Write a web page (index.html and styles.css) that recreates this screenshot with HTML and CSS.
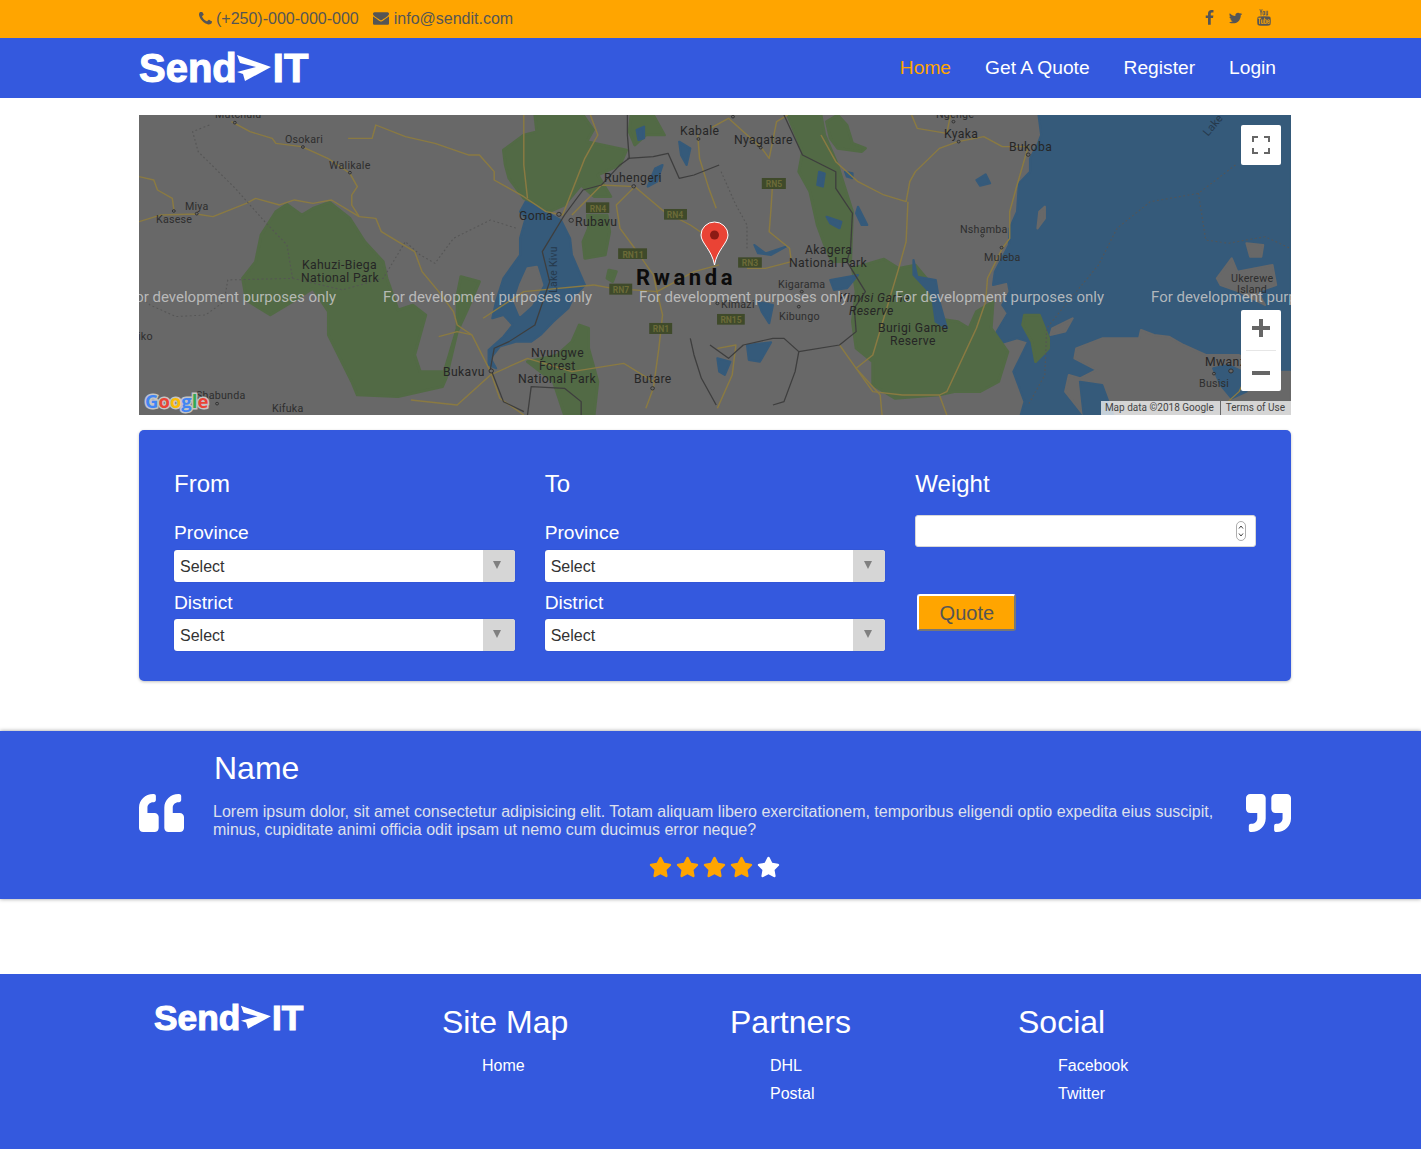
FILE: index.html
```html
<!DOCTYPE html>
<html lang="en">
<head>
<meta charset="utf-8">
<title>SendIT</title>
<link rel="stylesheet" href="styles.css">
</head>
<body>
<header>
  <div class="topbar">
    <div class="wrap topbar-in">
      <div class="contacts">
        <span class="contact"><svg class="ic ic-phone" viewBox="192 192 1408 1408"><path d="M1600 1240q0 27-10 70.5t-21 68.5q-21 50-122 106-94 51-186 51-27 0-53-3.5t-57.5-12.5-47-14.5-55.5-20.5-49-18q-98-35-175-83-127-79-264-216t-216-264q-48-77-83-175-3-9-18-49t-20.5-55.5-14.5-47-12.5-57.5-3.5-53q0-92 51-186 56-101 106-122 25-11 68.5-21t70.5-10q14 0 21 3 18 6 53 76 11 19 30 54t35 63.5 31 53.5q3 4 17.5 25t21.5 35.5 7 28.5q0 20-28.5 50t-62 55-62 53-28.5 46q0 9 5 22.5t8.5 20.5 14 24 11.5 19q76 137 174 235t235 174q2 1 19 11.5t24 14 20.5 8.5 22.5 5q18 0 46-28.5t53-62 55-62 50-28.5q14 0 28.5 7t35.5 21.5 25 17.5q25 15 53.5 31t63.5 35 54 30q70 35 76 53 3 7 3 21z"/></svg>(+250)-000-000-000</span>
        <span class="contact"><svg class="ic ic-mail" viewBox="0 0 1792 1792"><path d="M1792 710v794q0 66-47 113t-113 47h-1472q-66 0-113-47t-47-113v-794q44 49 101 87 362 246 497 345 57 42 92.5 65.5t94.5 48 110 24.5h2q51 0 110-24.5t94.5-48 92.5-65.5q170-123 498-345 57-39 100-87zm0-294q0 79-49 151t-122 123q-376 261-468 325-10 7-42.5 30.5t-54 38-52 32.5-57.5 27-50 9h-2q-23 0-50-9t-57.5-27-52-32.5-54-38-42.5-30.5q-91-64-262-182.5t-205-142.5q-62-42-117-115.5t-55-136.5q0-78 41.5-130t118.5-52h1472q65 0 112.5 47t47.5 113z"/></svg>info@sendit.com</span>
      </div>
      <div class="socials">
        <svg class="ic ic-fb" viewBox="400 0 1000 1792"><path d="M1343 12v264h-157q-86 0-116 36t-30 108v189h293l-39 296h-254v759h-306v-759h-255v-296h255v-218q0-186 104-288.5t277-102.5q147 0 228 12z"/></svg>
        <svg class="ic ic-tw" viewBox="0 100 1792 1592"><path d="M1684 408q-67 98-162 167 1 14 1 42 0 130-38 259.5t-115.5 248.5-184.5 210.5-258 146-323 54.5q-271 0-496-145 35 4 78 4 225 0 401-138-105-2-188-64.5t-114-159.5q33 5 61 5 43 0 85-11-112-23-185.5-111.5t-73.5-205.5v-4q68 38 146 41-66-44-105-115t-39-154q0-88 44-163 121 149 294.5 238.5t371.5 99.5q-8-38-8-74 0-134 94.5-228.5t228.5-94.5q140 0 236 102 109-21 200-76-35 110-138 165 92-10 184-50z"/></svg>
        <svg class="ic ic-yt" viewBox="130 0 1532 1792"><path d="M1099 1244v211q0 67-39 67-23 0-45-22v-301q22-22 45-22 39 0 39 67zm338 1v46h-90v-46q0-68 45-68t45 68zm-966-218h107v-94h-312v94h105v569h100v-569zm288 569h89v-494h-89v378q-30 42-57 42-18 0-21-21-1-3-1-35v-364h-89v391q0 49 8 73 12 37 58 37 48 0 102-61v54zm429-148v-197q0-73-9-99-17-56-71-56-50 0-93 54v-217h-89v663h89v-48q45 55 93 55 54 0 71-55 9-27 9-100zm338-10v-13h-91q0 51-2 61-7 36-40 36-46 0-46-69v-87h179v-103q0-79-27-116-39-51-106-51-68 0-107 51-28 37-28 116v173q0 79 29 116 39 51 108 51 72 0 108-53 18-27 21-54 2-9 2-58zm-608-913v-210q0-69-43-69t-43 69v210q0 70 43 70t43-70zm719 751q0 234-26 350-14 59-58 99t-102 46q-184 21-555 21t-555-21q-58-6-102.5-46t-57.5-99q-26-112-26-350 0-234 26-350 14-59 58-99t103-47q183-20 554-20t555 20q58 7 102.5 47t57.5 99q26 112 26 350zm-998-1276h102l-121 399v271h-100v-271q-14-74-61-212-37-103-65-187h106l71 263zm370 333v175q0 81-28 118-37 51-106 51-67 0-105-51-28-38-28-118v-175q0-80 28-117 38-51 105-51 69 0 106 51 28 37 28 117zm335-162v499h-91v-55q-53 62-103 62-46 0-59-37-8-24-8-75v-394h91v367q0 33 1 35 3 22 21 22 27 0 57-43v-381h91z"/></svg>
      </div>
    </div>
  </div>
  <nav class="navbar">
    <div class="wrap navbar-in">
      <a class="logo"><span>Send</span><svg class="logo-arrow" viewBox="0 0 36 30"><polygon points="1,2 35,14 9,28 7,21 1,19 20,14 4,10"/></svg><span>IT</span></a>
      <ul class="menu">
        <li class="active">Home</li>
        <li>Get A Quote</li>
        <li>Register</li>
        <li>Login</li>
      </ul>
    </div>
  </nav>
</header>

<main>
  <section class="wrap map">
    <svg class="map-art" viewBox="0 0 1152 300" width="1152" height="300">
      <rect class="land" width="1152" height="300"/>
      <g transform="scale(.37 .3333)">
        <polygon class="park" points="400,268 440,300 470,280 515,262 570,310 610,380 660,440 670,490 700,585 740,570 775,600 745,720 760,770 825,770 860,640 860,540 870,485 920,500 885,590 860,650 830,790 820,815 700,845 590,840 575,800 512,660 512,590 470,520 400,570 355,600 290,555 280,490 315,440 330,360 370,290"/>
        <polygon class="park" points="985,105 1040,60 1075,50 1070,0 1200,0 1228,45 1210,80 1318,105 1300,150 1240,180 1275,245 1230,245 1195,210 1150,270 1110,290 1040,250 1000,190 990,150"/>
        <polygon class="park" points="1212,300 1265,300 1272,350 1260,420 1205,430 1200,380 1215,340"/>
        <polygon class="park" points="1190,630 1215,640 1215,700 1240,800 1230,900 1150,900 1120,800 1050,740 1130,720 1170,680"/>
        <polygon class="park" points="1330,0 1390,0 1420,60 1370,60 1340,90 1325,50"/>
        <polygon class="park" points="1270,465 1290,470 1280,500 1265,490"/>
        <polygon class="water" points="1045,260 1075,275 1140,315 1165,370 1170,420 1205,510 1175,545 1160,580 1120,620 1085,660 1060,680 1020,680 975,695 950,730 965,760 945,750 945,705 985,665 1010,630 985,600 955,610 965,560 985,490 1030,420 1030,370 1045,310 1030,290"/>
        <polygon class="land" points="1050,460 1075,455 1090,510 1060,570 1030,600 1015,560 1030,510"/>
        <polygon class="water" points="1345,45 1365,35 1365,70 1350,75"/>
        <polygon class="water" points="1375,215 1400,200 1415,150 1395,160 1380,200"/>
        <polygon class="water" points="1460,80 1490,100 1480,150 1465,120"/>
        <polyline class="road" points="250,20 300,50 360,70 370,85 440,95 510,130 570,175 590,215 575,240 575,270 595,305 640,310 655,350 745,410 765,470 810,530 850,590 860,630 900,660 950,770 975,850 1040,900"/>
        <polyline class="road" points="0,320 60,300 155,297 200,305 290,265 315,250 380,270 420,255 470,265 520,255 595,305"/>
        <polyline class="road" points="0,185 40,195 50,225 90,250 95,290"/>
        <polyline class="road" points="565,70 630,70 640,30 720,65 800,85 890,120 920,120 960,170 960,195 1040,245 1100,290 1145,300 1205,130 1240,60 1220,0"/>
        <polyline class="road" points="1340,215 1290,270 1300,340 1340,400 1390,480 1400,530 1415,600 1405,700 1390,820 1370,880"/>
        <polyline class="road" points="1170,300 1250,210 1340,215 1420,290 1490,330 1530,360"/>
        <polyline class="road" points="1230,510 1280,520 1400,530 1500,470 1568,450"/>
        <polyline class="road" points="930,610 1040,530 1230,510"/>
        <polyline class="road" points="810,665 860,650 900,660"/>
        <polyline class="road" points="735,855 860,870 950,780 1050,730 1170,770 1310,745 1390,800"/>
        <polyline class="road" points="1510,60 1515,130 1540,220 1560,280"/>
        <polyline class="road" points="1040,0 1040,150 1050,250"/>
        <polyline class="border" points="1320,0 1320,60 1325,130 1300,150 1250,210 1200,225 1150,300 1090,410 1110,500 1070,630 1000,680 960,700 950,760 985,860 1040,890"/>
        <polyline class="border" points="1320,130 1390,125 1430,115 1460,190 1500,180 1568,150"/>
        <polyline class="border" points="1490,670 1500,720 1520,790 1560,870"/>
        <polyline class="border" points="1050,900 1060,815 1150,820 1195,860 1195,900"/>
        <polyline class="dash" points="190,30 145,50 160,110 260,220 340,320 400,390 415,490 240,495 230,560 180,600 100,605 30,570 0,540"/>
        <polyline class="dash" points="415,490 550,525 660,490 720,380 760,420 800,445 850,370 950,315 1020,340"/>
        <rect class="shield" x="1208" y="262" width="63" height="32"/>
        <rect class="shield" x="1419" y="282" width="62" height="32"/>
        <rect class="shield" x="1295" y="400" width="78" height="32"/>
        <rect class="shield" x="1271" y="506" width="62" height="33"/>
        <rect class="shield" x="1379" y="624" width="62" height="33"/>
        <circle class="town" cx="259" cy="23" r="4"/><circle class="town" cx="443" cy="96" r="4"/><circle class="town" cx="570" cy="173" r="4"/><circle class="town" cx="94" cy="288" r="4"/><circle class="town" cx="156" cy="296" r="4"/><circle class="town" cx="1135" cy="298" r="6"/><circle class="town" cx="1168" cy="316" r="6"/><circle class="town" cx="1337" cy="214" r="5"/><circle class="town" cx="1512" cy="72" r="4"/><circle class="town" cx="952" cy="768" r="6"/><circle class="town" cx="1388" cy="820" r="5"/><circle class="town" cx="211" cy="866" r="4"/>
      </g>
      <g transform="translate(571 0) scale(.37 .3333)">
        <polygon class="water" points="888,0 895,60 885,90 865,130 865,170 835,205 830,290 810,340 808,390 770,470 765,510 805,500 810,530 790,570 805,595 775,650 785,685 830,670 860,680 820,770 850,860 840,900 1568,900 1568,0"/>
        <polygon class="land" points="1568,770 1500,770 1430,720 1340,720 1280,690 1240,665 1200,660 1165,645 1160,670 1120,670 1060,670 990,700 985,730 1045,765 1000,790 970,780 960,830 1010,900 1568,900"/>
        <polygon class="water" points="1360,760 1400,750 1440,770 1450,830 1410,850 1380,810"/>
        <polygon class="water" points="1000,800 1060,810 1090,900 1010,900"/>
        <polygon class="land" points="1370,490 1410,430 1425,470 1520,450 1530,510 1480,530 1500,570 1430,530 1380,510"/>
        <polygon class="land" points="1450,385 1495,390 1490,425 1460,425"/>
        <polygon class="land" points="885,340 890,290 905,275 905,310"/>
        <polygon class="land" points="925,640 980,610 960,650 920,660"/>
        <polygon class="park" points="850,600 890,600 915,670 915,700 880,740 870,680 845,630"/>
        <polygon class="park" points="210,0 300,0 310,60 345,150 385,290 380,440 330,440 310,390 290,330 270,230 240,170 250,110"/>
        <polygon class="park" points="315,20 345,0 370,30 385,85 420,100 410,110 345,100 325,70"/>
        <polygon class="park" points="385,460 470,432 510,460 555,450 600,510 610,610 670,620 700,640 720,590 765,560 760,640 805,710 780,800 730,830 660,830 620,840 500,850 440,810 440,740 395,700 385,620 395,530"/>
        <polygon class="water" points="720,195 745,178 757,205 730,212"/>
        <polygon class="water" points="295,170 310,175 305,215 290,210"/>
        <polygon class="water" points="400,275 425,330 410,330 395,295"/>
        <polygon class="water" points="315,305 355,320 350,340 325,325"/>
        <polygon class="water" points="365,170 385,175 385,190 370,185"/>
        <polygon class="water" points="120,390 150,415 205,395 165,420 130,415"/>
        <polygon class="water" points="325,495 400,480 370,520 335,525"/>
        <polygon class="water" points="550,435 560,485 610,495 620,560 640,640 610,620 600,540 550,480"/>
        <polygon class="water" points="100,690 165,682 135,740 105,735"/>
        <polygon class="water" points="20,730 55,740 40,780 25,770"/>
        <polygon class="water" points="130,560 170,570 160,625 140,590"/>
        <polyline class="road" points="0,40 50,10 140,100 160,130 180,20 210,0"/>
        <polyline class="road" points="170,190 165,280 160,350 215,400 220,440 150,460 100,460"/>
        <polyline class="road" points="300,60 340,140 400,200 470,240 530,260 540,200 555,170 620,100 670,80 740,65 790,95 860,95 830,210 810,290 810,370 790,400 750,490 745,560 720,640 640,830 620,840 640,900"/>
        <polyline class="road" points="535,260 530,380 510,460 440,720 395,760 440,830 520,840 620,840"/>
        <polyline class="road" points="545,0 560,40 640,55 650,0"/>
        <polyline class="road" points="350,690 395,760 460,840 465,900"/>
        <polyline class="road" points="20,700 70,690 60,780 20,880"/>
        <polyline class="road" points="1460,760 1430,830 1400,860"/>
        <polyline class="border" points="200,0 250,120 340,170 340,220 385,295 380,400 370,440 420,530 390,580 395,650 350,690 240,710 200,670 170,670 90,690 50,730 0,690"/>
        <polyline class="border" points="240,710 230,770 200,860 170,870"/>
        <polyline class="dash" points="1420,150 1320,235 1190,260 1100,340 1050,450 960,570 910,640 905,780 860,870"/>
        <polyline class="dash" points="1320,235 1340,375 1400,385 1500,365 1568,400"/>
        <polyline class="dash" points="30,170 70,270 100,330 100,400"/>
        <rect class="shield" x="140" y="189" width="65" height="33"/>
        <rect class="shield" x="76" y="427" width="64" height="31"/>
        <rect class="shield" x="19" y="597" width="75" height="32"/>
        <circle class="town" cx="62" cy="5" r="4"/><circle class="town" cx="137" cy="98" r="4"/><circle class="town" cx="658" cy="20" r="4"/><circle class="town" cx="672" cy="80" r="4"/><circle class="town" cx="860" cy="119" r="5"/><circle class="town" cx="736" cy="362" r="4"/><circle class="town" cx="788" cy="398" r="4"/><circle class="town" cx="248" cy="530" r="4"/><circle class="town" cx="240" cy="575" r="4"/><circle class="town" cx="20" cy="565" r="4"/><circle class="town" cx="1408" cy="768" r="6"/><circle class="town" cx="1362" cy="776" r="4"/>
      </g>
      <g transform="translate(0 .7)">
        <text class="lbl" x="76" y="2">Mutchulu</text>
        <text class="lbl" x="146" y="27">Osokari</text>
        <text class="lbl" x="190" y="53">Walikale</text>
        <text class="lbl" x="46" y="94">Miya</text>
        <text class="lbl" x="17" y="107">Kasese</text>
        <text class="lbl b" x="163" y="153">Kahuzi-Biega</text>
        <text class="lbl b" x="162" y="166">National Park</text>
        <text class="lbl" x="-7" y="224">Liko</text>
        <text class="lbl b" x="380" y="104">Goma</text>
        <text class="lbl b" x="436" y="110">Rubavu</text>
        <text class="lbl b" x="465" y="66">Ruhengeri</text>
        <text class="lbl b" x="541" y="19">Kabale</text>
        <text class="lbl b" x="392" y="241">Nyungwe</text>
        <text class="lbl b" x="400" y="254">Forest</text>
        <text class="lbl b" x="379" y="267">National Park</text>
        <text class="lbl b" x="304" y="260">Bukavu</text>
        <text class="lbl b" x="495" y="267">Butare</text>
        <text class="lbl" x="57" y="283">Shabunda</text>
        <text class="lbl" x="133" y="296">Kifuka</text>
        <text class="lbl kivu" transform="translate(418 177) rotate(-90)">Lake Kivu</text>
        <text class="lbl b" x="595" y="28">Nyagatare</text>
        <text class="lbl b" x="805" y="22">Kyaka</text>
        <text class="lbl b" x="870" y="35">Bukoba</text>
        <text class="lbl" x="821" y="117">Nshamba</text>
        <text class="lbl" x="845" y="145">Muleba</text>
        <text class="lbl b" x="666" y="138">Akagera</text>
        <text class="lbl b" x="650" y="151">National Park</text>
        <text class="lbl" x="639" y="172">Kigarama</text>
        <text class="lbl" x="582" y="192">Kimazi</text>
        <text class="lbl" x="640" y="204">Kibungo</text>
        <text class="lbl b it" x="700" y="186">Kimisi Game</text>
        <text class="lbl b it" x="710" y="199">Reserve</text>
        <text class="lbl b" x="739" y="216">Burigi Game</text>
        <text class="lbl b" x="751" y="229">Reserve</text>
        <text class="lbl" x="1092" y="166">Ukerewe</text>
        <text class="lbl" x="1098" y="177">Island</text>
        <text class="lbl b" x="1066" y="250">Mwanza</text>
        <text class="lbl" x="1060" y="271">Busisi</text>
        <text class="lbl" x="797" y="2">Ngenge</text>
        <text class="lbl lake" transform="translate(1069 21) rotate(-50)">Lake</text>
        <text class="rn" x="459" y="96">RN4</text>
        <text class="rn" x="536" y="102">RN4</text>
        <text class="rn" x="494" y="142">RN11</text>
        <text class="rn" x="482" y="177">RN7</text>
        <text class="rn" x="522" y="216">RN1</text>
        <text class="rn" x="635" y="71">RN5</text>
        <text class="rn" x="611" y="150">RN3</text>
        <text class="rn" x="592" y="207">RN15</text>
      </g>
      <text class="lbl-rw" x="497" y="170">Rwanda</text>
      <text class="dev" x="-12" y="187">For development purposes only</text>
      <text class="dev" x="244" y="187">For development purposes only</text>
      <text class="dev" x="500" y="187">For development purposes only</text>
      <text class="dev" x="756" y="187">For development purposes only</text>
      <text class="dev" x="1012" y="187">For development purposes only</text>
      <path class="pin" d="M575.5 150 C573 135 562 128 562 120 A13.5 13 0 0 1 589 120 C589 128 578 135 575.5 150Z"/>
      <circle class="pin-dot" cx="575.5" cy="120" r="4.5"/>
      <text class="glogo" x="6" y="293"><tspan class="g-b">G</tspan><tspan class="g-r">o</tspan><tspan class="g-y">o</tspan><tspan class="g-b">g</tspan><tspan class="g-g">l</tspan><tspan class="g-r">e</tspan></text>
    </svg>
    <div class="map-btn fullscreen">
      <svg viewBox="0 0 18 18" width="18" height="18"><path d="M0 6V0h6v2H2v4zM12 0h6v6h-2V2h-4zM0 12h2v4h4v2H0zM16 12h2v6h-6v-2h4z"/></svg>
    </div>
    <div class="map-btn zoomctl">
      <div class="zoom-cell zoom-in"><svg viewBox="0 0 18 18" width="18" height="18"><path d="M7 0h4v7h7v4h-7v7H7v-7H0V7h7z"/></svg></div>
      <div class="zoom-line"></div>
      <div class="zoom-cell zoom-out"><svg viewBox="0 0 18 18" width="18" height="18"><path d="M0 7h18v4H0z"/></svg></div>
    </div>
    <div class="attrib"><span class="attrib-a">Map data ©2018 Google</span><span class="attrib-b">Terms of Use</span></div>
  </section>

  <section class="wrap quote-form">
    <div class="fcol">
      <h3>From</h3>
      <label>Province</label>
      <div class="select"><span class="sel-val">Select</span><span class="sel-arrow"></span></div>
      <label class="second">District</label>
      <div class="select"><span class="sel-val">Select</span><span class="sel-arrow"></span></div>
    </div>
    <div class="fcol">
      <h3>To</h3>
      <label>Province</label>
      <div class="select"><span class="sel-val">Select</span><span class="sel-arrow"></span></div>
      <label class="second">District</label>
      <div class="select"><span class="sel-val">Select</span><span class="sel-arrow"></span></div>
    </div>
    <div class="fcol">
      <h3 class="tight">Weight</h3>
      <div class="num">
        <input class="num-input" type="text" aria-label="Weight">
        <svg class="spin" viewBox="0 0 10 20" width="10" height="20"><rect x=".5" y=".5" width="9" height="19" rx="4.5"/><path d="M3 7.5l2-2.5 2 2.5M3 12.5l2 2.5 2-2.5"/></svg>
      </div>
      <button class="quote-btn" type="button">Quote</button>
    </div>
  </section>

  <section class="testimonial">
    <div class="wrap">
      <div class="t-row">
        <svg class="q" viewBox="0 32 512 448" preserveAspectRatio="none"><path d="M464 256h-80v-64c0-35.3 28.7-64 64-64h8c13.3 0 24-10.7 24-24V56c0-13.3-10.7-24-24-24h-8c-88.4 0-160 71.6-160 160v240c0 26.5 21.5 48 48 48h128c26.5 0 48-21.5 48-48V304c0-26.5-21.5-48-48-48zm-288 0H96v-64c0-35.3 28.7-64 64-64h8c13.3 0 24-10.7 24-24V56c0-13.3-10.7-24-24-24h-8C71.6 32 0 103.6 0 192v240c0 26.5 21.5 48 48 48h128c26.5 0 48-21.5 48-48V304c0-26.5-21.5-48-48-48z"/></svg>
        <div class="t-body">
          <h2>Name</h2>
          <p>Lorem ipsum dolor, sit amet consectetur adipisicing elit. Totam aliquam libero exercitationem, temporibus eligendi optio expedita eius suscipit, minus, cupiditate animi officia odit ipsam ut nemo cum ducimus error neque?</p>
        </div>
        <svg class="q" viewBox="0 32 512 448" preserveAspectRatio="none"><path d="M464 32H336c-26.5 0-48 21.5-48 48v128c0 26.5 21.5 48 48 48h80v64c0 35.3-28.7 64-64 64h-8c-13.3 0-24 10.7-24 24v48c0 13.3 10.7 24 24 24h8c88.4 0 160-71.6 160-160V80c0-26.5-21.5-48-48-48zm-288 0H48C21.5 32 0 53.5 0 80v128c0 26.5 21.5 48 48 48h80v64c0 35.3-28.7 64-64 64h-8c-13.3 0-24 10.7-24 24v48c0 13.3 10.7 24 24 24h8c88.4 0 160-71.6 160-160V80c0-26.5-21.5-48-48-48z"/></svg>
      </div>
      <div class="stars">
        <svg class="star on" viewBox="0 0 576 512"><path d="M259.3 17.8L194 150.2 47.9 171.5c-26.2 3.8-36.7 36.1-17.7 54.6l105.7 103-25 145.5c-4.5 26.3 23.2 46 46.4 33.7L288 439.6l130.7 68.7c23.2 12.2 50.9-7.4 46.4-33.7l-25-145.5 105.7-103c19-18.5 8.5-50.8-17.7-54.6L382 150.2 316.7 17.8c-11.7-23.6-45.6-23.9-57.4 0z"/></svg>
        <svg class="star on" viewBox="0 0 576 512"><path d="M259.3 17.8L194 150.2 47.9 171.5c-26.2 3.8-36.7 36.1-17.7 54.6l105.7 103-25 145.5c-4.5 26.3 23.2 46 46.4 33.7L288 439.6l130.7 68.7c23.2 12.2 50.9-7.4 46.4-33.7l-25-145.5 105.7-103c19-18.5 8.5-50.8-17.7-54.6L382 150.2 316.7 17.8c-11.7-23.6-45.6-23.9-57.4 0z"/></svg>
        <svg class="star on" viewBox="0 0 576 512"><path d="M259.3 17.8L194 150.2 47.9 171.5c-26.2 3.8-36.7 36.1-17.7 54.6l105.7 103-25 145.5c-4.5 26.3 23.2 46 46.4 33.7L288 439.6l130.7 68.7c23.2 12.2 50.9-7.4 46.4-33.7l-25-145.5 105.7-103c19-18.5 8.5-50.8-17.7-54.6L382 150.2 316.7 17.8c-11.7-23.6-45.6-23.9-57.4 0z"/></svg>
        <svg class="star on" viewBox="0 0 576 512"><path d="M259.3 17.8L194 150.2 47.9 171.5c-26.2 3.8-36.7 36.1-17.7 54.6l105.7 103-25 145.5c-4.5 26.3 23.2 46 46.4 33.7L288 439.6l130.7 68.7c23.2 12.2 50.9-7.4 46.4-33.7l-25-145.5 105.7-103c19-18.5 8.5-50.8-17.7-54.6L382 150.2 316.7 17.8c-11.7-23.6-45.6-23.9-57.4 0z"/></svg>
        <svg class="star" viewBox="0 0 576 512"><path d="M259.3 17.8L194 150.2 47.9 171.5c-26.2 3.8-36.7 36.1-17.7 54.6l105.7 103-25 145.5c-4.5 26.3 23.2 46 46.4 33.7L288 439.6l130.7 68.7c23.2 12.2 50.9-7.4 46.4-33.7l-25-145.5 105.7-103c19-18.5 8.5-50.8-17.7-54.6L382 150.2 316.7 17.8c-11.7-23.6-45.6-23.9-57.4 0z"/></svg>
      </div>
    </div>
  </section>
</main>

<footer>
  <div class="wrap foot-grid">
    <div class="fcell">
      <a class="logo logo-small"><span>Send</span><svg class="logo-arrow" viewBox="0 0 36 30"><polygon points="1,2 35,14 9,28 7,21 1,19 20,14 4,10"/></svg><span>IT</span></a>
    </div>
    <div class="fcell">
      <h2>Site Map</h2>
      <ul><li>Home</li></ul>
    </div>
    <div class="fcell">
      <h2>Partners</h2>
      <ul><li>DHL</li><li>Postal</li></ul>
    </div>
    <div class="fcell">
      <h2>Social</h2>
      <ul><li>Facebook</li><li>Twitter</li></ul>
    </div>
  </div>
</footer>
</body>
</html>
```

FILE: styles.css
```css
* { box-sizing: border-box; }
html, body { margin: 0; padding: 0; }
body {
  background: #fff;
  font-family: "Liberation Sans", Arial, sans-serif;
  font-size: 16px;
  color: #fff;
  height: 1149px;
  overflow: hidden;
}
.wrap { width: 1152px; margin-left: 139px; }
ul { list-style: none; margin: 0; padding: 0; }
h2, h3, p { margin: 0; font-weight: 400; }

/* top bar */
.topbar { background: #ffa500; height: 38px; color: #555; }
.topbar-in { height: 38px; display: flex; align-items: center; justify-content: space-between; padding: 0 20px 0 60px; }
.contacts { display: flex; gap: 14px; margin-top: -2px; }
.contact { display: flex; align-items: center; gap: 4px; line-height: 37px; }
.ic { fill: #555; display: block; }
.ic-phone { width: 13px; height: 13px; }
.ic-mail { width: 16px; height: 16px; margin-right: 1px; }
.socials { display: flex; gap: 14px; align-items: center; margin-top: -3px; }
.ic-fb { width: 9px; height: 16px; }
.ic-tw { width: 15px; height: 14px; margin-top: 1px; }
.ic-yt { width: 14px; height: 17px; }

/* nav */
.navbar { background: #3459de; height: 60px; }
.navbar-in { height: 60px; display: flex; align-items: center; justify-content: space-between; }
.logo { display: inline-flex; align-items: center; font-weight: 700; font-size: 40px; line-height: 1; color: #fff; -webkit-text-stroke: 1.1px #fff; }
.logo-arrow { width: .9em; height: .75em; fill: #fff; margin: 0 .02em 0 -.02em; }
.logo-small { font-size: 35.3px; }
.menu { display: flex; gap: 34px; padding-right: 15px; font-size: 19.2px; }
.menu .active { color: #ffa500; }

/* map */
.map { position: relative; height: 300px; margin-top: 17px; overflow: hidden; }
.map-art { display: block; }
.land { fill: #686868; stroke: #686868; stroke-width: 6; stroke-linejoin: round; }
.water { fill: #355a7a; stroke: #355a7a; stroke-width: 6; stroke-linejoin: round; }
.park { fill: #526a45; stroke: #526a45; stroke-width: 8; stroke-linejoin: round; }
.road { fill: none; stroke: #8a7a42; stroke-width: 4; stroke-linejoin: round; }
.border { fill: none; stroke: #3e3e3e; stroke-width: 3.5; stroke-linejoin: round; }
.dash { fill: none; stroke: #555; stroke-width: 3; stroke-dasharray: 5 7; }
.town { fill: #686868; stroke: #2c2c2c; stroke-width: 2.5; }
.lbl { font-family: Roboto, sans-serif; font-size: 10.7px; fill: #2e2e2e; letter-spacing: .22px; }
.lbl.b { font-size: 12.2px; fill: #262626; letter-spacing: .37px; }
.lbl.it { font-style: italic; }
.lbl.kivu { font-size: 10.4px; fill: #26394c; }
.lbl.lake { font-size: 11px; fill: #26394c; }
.shield { fill: #3f4a2a; }
.rn { font-family: Roboto, sans-serif; font-size: 8.5px; font-weight: 700; fill: #6b6a38; text-anchor: middle; }
.lbl-rw { font-family: Roboto, sans-serif; font-size: 22px; font-weight: 700; fill: #0c0c0c; letter-spacing: 3.6px; }
.dev { font-family: Roboto, sans-serif; font-size: 15px; fill: #c8c8c8; fill-opacity: .85; }
.pin { fill: #ea4335; stroke: #fff; stroke-width: 1; }
.pin-dot { fill: #8c1a14; }
.glogo { font-family: "Open Sans", sans-serif; font-size: 18.5px; font-weight: 700; stroke: #c4c4c4; stroke-width: 3px; paint-order: stroke; }
.g-b { fill: #4285f4; }
.g-r { fill: #ea4335; }
.g-y { fill: #fbbc05; }
.g-g { fill: #34a853; }
.map-btn { position: absolute; right: 10px; width: 40px; background: #fff; border-radius: 2px; }
.map-btn svg { display: block; fill: #666; }
.fullscreen { top: 10px; height: 40px; display: flex; align-items: center; justify-content: center; }
.zoomctl { top: 195px; height: 81px; }
.zoom-cell { height: 40px; display: flex; align-items: center; justify-content: center; }
.zoom-in { padding-bottom: 4px; }
.zoom-out { padding-top: 4px; }
.zoom-line { height: 1px; margin: 0 5px; background: #e6e6e6; }
.attrib { position: absolute; right: 0; bottom: 0; display: flex; gap: 1px; font-family: Roboto, sans-serif; font-size: 10px; line-height: 14px; height: 14px; color: #444; }
.attrib span { background: rgba(255, 255, 255, .72); }
.attrib-a { padding: 0 6px 0 4px; }
.attrib-b { padding: 0 6px 0 5px; }

/* quote form */
.quote-form {
  display: grid;
  grid-template-columns: repeat(3, 1fr);
  column-gap: 30px;
  margin-top: 15px;
  height: 251px;
  padding: 35px 35px 30px;
  background: #3459de;
  border-radius: 5px;
  box-shadow: 0 1px 3px rgba(0, 0, 0, .25);
}
.fcol h3 { font-size: 24px; line-height: 38px; margin-bottom: 19px; }
.fcol h3.tight { margin-bottom: 12px; }
.fcol label { display: block; font-size: 19.2px; line-height: 22px; margin-bottom: 6px; }
.fcol label.second { margin-top: 10px; margin-bottom: 5px; }
.select { display: flex; height: 32px; background: #fff; border-radius: 3px; overflow: hidden; color: #333; box-shadow: 0 0 1px rgba(0, 0, 0, .3); }
.sel-val { flex: 1; padding-left: 6px; line-height: 33px; }
.sel-arrow { width: 32px; background: #d6d6d6; display: flex; align-items: center; justify-content: center; padding-right: 3px; }
.sel-arrow::after { content: ""; border-left: 4px solid transparent; border-right: 4px solid transparent; border-top: 8px solid #808080; margin-top: -3px; }
.num { position: relative; height: 32px; }
.num-input { display: block; width: 100%; height: 32px; border: 1px solid #d8d8d8; border-radius: 3px; background: #fff; padding: 0; }
.spin { position: absolute; right: 10px; top: 6px; fill: #fff; stroke: #777; stroke-width: .6; }
.spin path { fill: none; stroke: #444; stroke-width: 1; }
.quote-btn {
  display: block;
  margin: 47px 0 0 2px;
  width: 99px;
  height: 37px;
  padding: 1px 0 0;
  background: #ffa500;
  border: 2px solid;
  border-color: #fff #777 #777 #fff;
  border-radius: 3px;
  color: #555;
  font: 20px "Liberation Sans", Arial, sans-serif;
}

/* testimonial */
.testimonial { margin-top: 50px; height: 168px; background: #3459de; box-shadow: 0 0 4px rgba(0, 0, 0, .4); padding-top: 19px; }
.t-row { display: grid; grid-template-columns: 45px 1fr 45px; }
.q { width: 45px; height: 38px; fill: #fff; margin-top: 44px; }
.t-body { padding: 0 30px 0 29px; }
.t-body h2 { font-size: 32px; line-height: 37px; margin-left: 1px; }
.t-body p { margin-top: 16px; line-height: 18px; color: #dfe0ec; }
.stars { display: flex; justify-content: center; gap: 4px; margin-top: 17px; padding-right: 1px; }
.star { width: 23px; height: 22px; fill: #fff; }
.star.on { fill: #ffa500; }

/* footer */
footer { margin-top: 75px; height: 175px; background: #3459de; }
.foot-grid { display: grid; grid-template-columns: repeat(4, 1fr); padding-top: 30px; }
.fcell { padding: 0 15px; }
.fcell h2 { font-size: 32px; line-height: 37px; }
.fcell ul { margin-top: 11px; padding-left: 40px; }
.fcell li { line-height: 28px; }
.logo-small { display: flex; width: max-content; margin-top: -4px; }
```
